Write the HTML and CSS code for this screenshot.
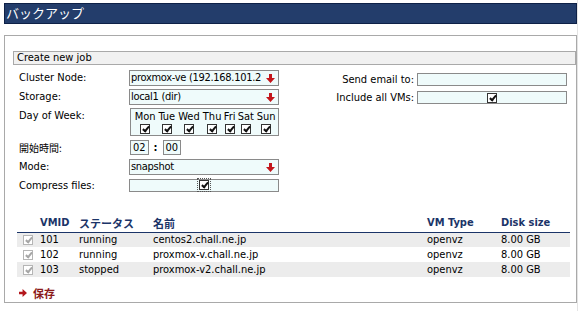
FILE: index.html
```html
<!DOCTYPE html>
<html lang="ja">
<head>
    <meta charset="UTF-8">
    <title>バックアップ</title>
    <link rel="stylesheet" href="styles.css">
</head>
<body>
    <div class="page">
        <div class="titlebar">バックアップ</div>

        <div class="panel">
            <div class="job">
                <div class="job-head">Create new job</div>
                <div class="job-form">
                    <div class="col-left">
                        <span class="lbl">Cluster Node:</span>
                        <div class="select">
                            <span class="select-text">proxmox-ve (192.168.101.2</span>
                            <svg class="arrow" viewBox="0 0 9 9"><path d="M3 0h3v4h3L4.5 9 0 4h3z"/></svg>
                        </div>

                        <span class="lbl">Storage:</span>
                        <div class="select">
                            <span class="select-text">local1 (dir)</span>
                            <svg class="arrow" viewBox="0 0 9 9"><path d="M3 0h3v4h3L4.5 9 0 4h3z"/></svg>
                        </div>

                        <span class="lbl">Day of Week:</span>
                        <div class="days">
                            <table>
                                <tr><td>Mon</td><td>Tue</td><td>Wed</td><td>Thu</td><td>Fri</td><td>Sat</td><td>Sun</td></tr>
                                <tr>
                                    <td><span class="cb"></span></td>
                                    <td><span class="cb"></span></td>
                                    <td><span class="cb"></span></td>
                                    <td><span class="cb"></span></td>
                                    <td><span class="cb"></span></td>
                                    <td><span class="cb"></span></td>
                                    <td><span class="cb"></span></td>
                                </tr>
                            </table>
                        </div>

                        <span class="lbl jp">開始時間:</span>
                        <div class="time">
                            <span class="num">02</span>
                            <span class="colon">:</span>
                            <span class="num">00</span>
                        </div>

                        <span class="lbl">Mode:</span>
                        <div class="select">
                            <span class="select-text">snapshot</span>
                            <svg class="arrow" viewBox="0 0 9 9"><path d="M3 0h3v4h3L4.5 9 0 4h3z"/></svg>
                        </div>

                        <span class="lbl">Compress files:</span>
                        <div class="field short center">
                            <span class="focus"><span class="cb"></span></span>
                        </div>
                    </div>

                    <div class="col-right">
                        <span class="lbl-r">Send email to:</span>
                        <div class="field"></div>

                        <span class="lbl-r">Include all VMs:</span>
                        <div class="field center"><span class="cb"></span></div>
                    </div>
                </div>
            </div>

            <table class="vms">
                <colgroup>
                    <col style="width: 20px">
                    <col style="width: 39px">
                    <col style="width: 74px">
                    <col style="width: 274px">
                    <col style="width: 74px">
                    <col style="width: 72px">
                </colgroup>
                <thead>
                    <tr>
                        <th></th>
                        <th>VMID</th>
                        <th>ステータス</th>
                        <th>名前</th>
                        <th>VM Type</th>
                        <th>Disk size</th>
                    </tr>
                </thead>
                <tbody>
                    <tr>
                        <td class="sel"><span class="cb off"></span></td>
                        <td>101</td>
                        <td>running</td>
                        <td>centos2.chall.ne.jp</td>
                        <td>openvz</td>
                        <td>8.00 GB</td>
                    </tr>
                    <tr>
                        <td class="sel"><span class="cb off"></span></td>
                        <td>102</td>
                        <td>running</td>
                        <td>proxmox-v.chall.ne.jp</td>
                        <td>openvz</td>
                        <td>8.00 GB</td>
                    </tr>
                    <tr>
                        <td class="sel"><span class="cb off"></span></td>
                        <td>103</td>
                        <td>stopped</td>
                        <td>proxmox-v2.chall.ne.jp</td>
                        <td>openvz</td>
                        <td>8.00 GB</td>
                    </tr>
                </tbody>
            </table>

            <a class="save" href="#">
                <svg class="save-arrow" viewBox="0 0 9 9"><path d="M0 3h4V0l5 4.5L4 9V6H0z"/></svg>
                <span>保存</span>
            </a>
        </div>
    </div>
</body>
</html>
```

FILE: styles.css
```css
* {
    margin: 0;
    padding: 0;
    box-sizing: border-box;
}

body {
    font-family: "DejaVu Sans Condensed", "DejaVu Sans", "Noto Sans CJK JP", sans-serif;
    font-size: 11px;
    color: #000;
    background: white;
}

.page {
    width: 578px;
    min-height: 311px;
    padding-top: 3px;
    border-right: 1px solid #e4e4e4;
}

.titlebar {
    margin: 0 0 0 4px;
    height: 21px;
    background: #233d6b;
    border: 1px solid #0e2147;
    color: white;
    font-family: "Noto Sans CJK JP", sans-serif;
    font-size: 13px;
    line-height: 18px;
    padding-left: 1px;
}

.panel {
    margin: 11px 0 0 4px;
    height: 268px;
    border: 1px solid #a9a9a9;
    padding: 15px 0 0 8px;
}

/* ジョブ作成フォーム */
.job-head {
    height: 14px;
    background: #f1f1f1;
    border: 1px solid #a9a9a9;
    line-height: 12px;
    padding-left: 3px;
}

.job-form {
    display: flex;
    padding: 5px 9px 0 6px;
}

.col-left {
    display: grid;
    grid-template-columns: 110px 150px;
    row-gap: 3px;
}

.col-right {
    flex: 1;
    display: grid;
    grid-template-columns: auto 150px;
    justify-content: end;
    align-content: start;
    column-gap: 3px;
    row-gap: 5px;
    padding-top: 3px;
}

.lbl {
    line-height: 16px;
    white-space: nowrap;
}

.lbl.jp {
    font-family: "Noto Sans CJK JP", sans-serif;
    font-size: 10px;
    line-height: 17px;
}

.lbl-r {
    line-height: 13px;
    text-align: right;
    white-space: nowrap;
}

.select,
.field,
.days,
.num {
    background: #effbfb;
    border: 1px solid #8a8a8a;
}

.select {
    height: 16px;
    display: flex;
    align-items: center;
    gap: 3px;
    padding: 0 3px 0 1px;
    white-space: nowrap;
}

.select-text {
    flex: 1;
    line-height: 14px;
    letter-spacing: -0.3px;
}

.arrow {
    width: 9px;
    height: 9px;
    fill: #c3161c;
    flex-shrink: 0;
}

.field {
    height: 13px;
}

.field.short {
    height: 13px;
    margin-top: 1px;
}

.center {
    display: flex;
    align-items: center;
    justify-content: center;
}

.days {
    height: 28px;
    margin-left: 1px;
    padding: 2px 1px 0 2px;
}

.days table {
    width: 100%;
    border-collapse: collapse;
}

.days td {
    text-align: center;
    padding: 0;
    line-height: 11px;
    height: 11px;
}

.days tr + tr td {
    padding-top: 1px;
}

.time {
    display: flex;
    align-items: center;
    height: 16px;
    margin-left: 1px;
}

.num {
    height: 15px;
    padding: 0 2px;
    line-height: 13px;
}

.colon {
    margin: 0 5px;
    font-weight: bold;
}

/* チェックボックス */
.cb {
    display: inline-block;
    position: relative;
    width: 10px;
    height: 10px;
    border: 1px solid #333;
    background: white;
    vertical-align: middle;
}

.cb::after {
    content: "";
    position: absolute;
    left: 3px;
    top: 0;
    width: 2px;
    height: 5px;
    border: solid #111;
    border-width: 0 2px 2px 0;
    transform: rotate(40deg);
}

.cb.off {
    border-color: #b5b5b5;
}

.cb.off::after {
    border-color: #a6a6a6;
}

.focus {
    display: inline-flex;
    padding: 1px;
    border: 1px dotted #555;
    margin-top: -2px;
}

/* VM一覧 */
.vms {
    width: 553px;
    margin: 20px 0 0 4px;
    border-collapse: collapse;
    table-layout: fixed;
}

.vms th {
    height: 18px;
    text-align: left;
    padding: 0 0 0 3px;
    color: #1b3468;
    font-weight: bold;
    border-bottom: 1px solid #1b3468;
    font-family: "DejaVu Sans Condensed", "Noto Sans CJK JP", sans-serif;
    white-space: nowrap;
}

.vms td {
    height: 15px;
    line-height: 14px;
    padding: 0 0 0 3px;
    white-space: nowrap;
}

.vms td.sel {
    padding-left: 6px;
}

.vms tbody tr:nth-child(odd) {
    background: #ececec;
}

.save {
    display: inline-flex;
    align-items: center;
    gap: 6px;
    margin: 8px 0 0 6px;
    color: #8b1a1a;
    font-family: "Noto Sans CJK JP", sans-serif;
    font-weight: bold;
    font-size: 11px;
    text-decoration: none;
}

.save-arrow {
    width: 8px;
    height: 8px;
    fill: #b3171c;
}
```
